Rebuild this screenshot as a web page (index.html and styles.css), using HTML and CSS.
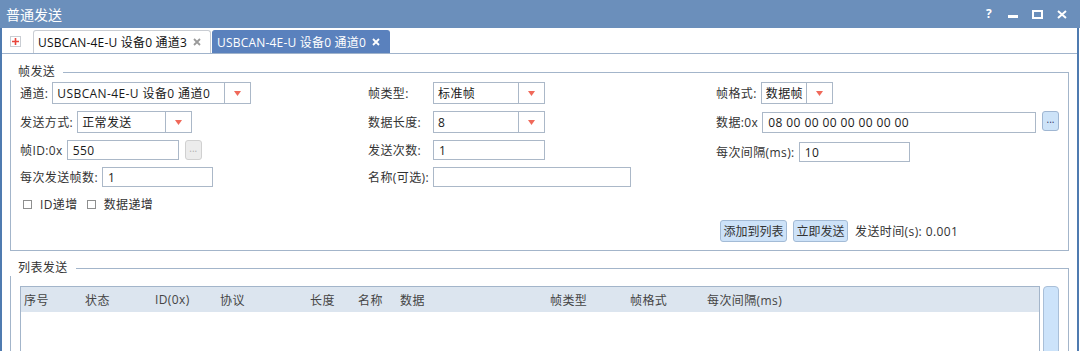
FILE: index.html
```html
<!DOCTYPE html>
<html lang="zh-CN">
<head>
    <meta charset="UTF-8">
    <title>普通发送</title>
    <link rel="stylesheet" href="styles.css">
</head>
<body>
    <div class="titlebar">
        <span class="title">普通发送</span>
        <div class="win-btns">
            <span class="win-help">?</span>
            <svg width="10" height="10" viewBox="0 0 10 10"><rect x="0" y="6" width="10" height="3" fill="#fff"/></svg>
            <svg width="11" height="9" viewBox="0 0 11 9"><rect x="1" y="1" width="9" height="7" fill="none" stroke="#fff" stroke-width="2"/></svg>
            <svg width="10" height="9" viewBox="0 0 10 9"><path d="M1 1 L9 8 M9 1 L1 8" stroke="#fff" stroke-width="2"/></svg>
        </div>
    </div>

    <div class="window">
        <div class="tabstrip">
            <span class="tab-add">
                <svg width="9" height="9" viewBox="0 0 9 9"><path d="M4.5 1 V8 M1 4.5 H8" stroke="#e8453c" stroke-width="1.6"/></svg>
            </span>
            <div class="tab">
                <span>USBCAN-4E-U 设备0 通道3</span>
                <svg class="tab-close" width="8" height="8" viewBox="0 0 8 8"><path d="M1 1 L7 7 M7 1 L1 7" stroke="#9a9a9a" stroke-width="1.8"/></svg>
            </div>
            <div class="tab active">
                <span>USBCAN-4E-U 设备0 通道0</span>
                <svg class="tab-close" width="8" height="8" viewBox="0 0 8 8"><path d="M1 1 L7 7 M7 1 L1 7" stroke="#fff" stroke-width="1.8"/></svg>
            </div>
        </div>

        <div class="main">
            <!-- 帧发送 -->
            <div class="group">
                <div class="group-head">
                    <span class="group-title">帧发送</span>
                    <span class="group-rule"></span>
                </div>
                <div class="group-body frame-body">
                    <div class="col">
                        <div class="field">
                            <label>通道:</label>
                            <div class="combo combo-channel"><span class="combo-text">USBCAN-4E-U 设备0 通道0</span><span class="combo-arrow"><svg width="7" height="5" viewBox="0 0 7 5"><path d="M0 0 H7 L3.5 5 Z" fill="#f0695a"/></svg></span></div>
                        </div>
                        <div class="field">
                            <label>发送方式:</label>
                            <div class="combo combo-mode"><span class="combo-text">正常发送</span><span class="combo-arrow"><svg width="7" height="5" viewBox="0 0 7 5"><path d="M0 0 H7 L3.5 5 Z" fill="#f0695a"/></svg></span></div>
                        </div>
                        <div class="field short">
                            <label>帧ID:0x</label>
                            <input class="in-id" type="text" value="550">
                            <span class="dots-btn disabled">...</span>
                        </div>
                        <div class="field short">
                            <label>每次发送帧数:</label>
                            <input class="in-count" type="text" value="1">
                        </div>
                        <div class="field short checks">
                            <span class="check"></span><span class="check-label">ID递增</span>
                            <span class="check"></span><span class="check-label">数据递增</span>
                        </div>
                    </div>

                    <div class="col col-mid">
                        <div class="field">
                            <label>帧类型:</label>
                            <div class="combo combo-type"><span class="combo-text">标准帧</span><span class="combo-arrow"><svg width="7" height="5" viewBox="0 0 7 5"><path d="M0 0 H7 L3.5 5 Z" fill="#f0695a"/></svg></span></div>
                        </div>
                        <div class="field">
                            <label>数据长度:</label>
                            <div class="combo combo-type"><span class="combo-text">8</span><span class="combo-arrow"><svg width="7" height="5" viewBox="0 0 7 5"><path d="M0 0 H7 L3.5 5 Z" fill="#f0695a"/></svg></span></div>
                        </div>
                        <div class="field short">
                            <label>发送次数:</label>
                            <input class="in-times" type="text" value="1">
                        </div>
                        <div class="field short">
                            <label>名称(可选):</label>
                            <input class="in-name" type="text" value="">
                        </div>
                    </div>

                    <div class="col col-right">
                        <div class="field">
                            <label>帧格式:</label>
                            <div class="combo combo-format"><span class="combo-text">数据帧</span><span class="combo-arrow"><svg width="7" height="5" viewBox="0 0 7 5"><path d="M0 0 H7 L3.5 5 Z" fill="#f0695a"/></svg></span></div>
                        </div>
                        <div class="field">
                            <label>数据:0x</label>
                            <input class="in-data" type="text" value="08 00 00 00 00 00 00 00">
                            <span class="dots-btn">...</span>
                        </div>
                        <div class="field short interval">
                            <label>每次间隔(ms):</label>
                            <input class="in-interval" type="text" value="10">
                        </div>
                        <div class="actions">
                            <button class="btn btn-add">添加到列表</button>
                            <button class="btn btn-send">立即发送</button>
                            <span class="send-time">发送时间(s): 0.001</span>
                        </div>
                    </div>
                </div>
            </div>

            <!-- 列表发送 -->
            <div class="group group-list">
                <div class="group-head">
                    <span class="group-title">列表发送</span>
                    <span class="group-rule"></span>
                </div>
                <div class="group-body list-body">
                    <div class="table">
                        <div class="table-head">
                            <span>序号</span>
                            <span>状态</span>
                            <span>ID(0x)</span>
                            <span>协议</span>
                            <span>长度</span>
                            <span>名称</span>
                            <span>数据</span>
                            <span>帧类型</span>
                            <span>帧格式</span>
                            <span>每次间隔(ms)</span>
                        </div>
                    </div>
                    <div class="scrollbar"></div>
                </div>
            </div>
        </div>
    </div>
</body>
</html>
```

FILE: styles.css
```css
/* 普通发送 window */
* {
    box-sizing: border-box;
}

body {
    margin: 0;
    width: 1080px;
    height: 351px;
    overflow: hidden;
    background: #ffffff;
    font-family: "Open Sans", "Noto Sans CJK SC", sans-serif;
    font-size: 12px;
    letter-spacing: 0.4px;
    color: #333333;
}

.titlebar {
    height: 28px;
    background-color: #6b8fbb;
    color: #ffffff;
    display: flex;
    align-items: center;
    padding-left: 6px;
}

.title {
    font-size: 14px;
    letter-spacing: 0;
    font-family: "Noto Sans CJK SC", sans-serif;
}

.win-btns {
    margin-left: auto;
    display: flex;
    align-items: center;
    gap: 14px;
    padding-right: 13px;
}

.win-help {
    font-weight: bold;
    font-size: 12px;
    width: 7px;
    line-height: 12px;
    margin-right: 1px;
}

.window {
    width: 1079px;
    height: 323px;
    border-left: 2px solid #4f7bb0;
    border-right: 2px solid #4f7bb0;
    overflow: hidden;
}

/* tabs */
.tabstrip {
    height: 26px;
    border-bottom: 1px solid #a0b3cb;
    display: flex;
    align-items: flex-end;
    padding-left: 8px;
}

.tab-add {
    align-self: center;
    width: 11px;
    height: 11px;
    margin-right: 12px;
    margin-top: 1px;
    border: 1px solid #c9cdd3;
    display: flex;
    align-items: center;
    justify-content: center;
}

.tab {
    width: 178px;
    height: 23px;
    padding: 0 9px 0 4px;
    display: flex;
    align-items: center;
    border: 1px solid #c9cdd3;
    border-bottom: none;
    border-radius: 3px 3px 0 0;
    color: #111111;
    letter-spacing: 0.2px;
    white-space: nowrap;
}

.tab.active {
    background-color: #5a81bd;
    border-color: #5a81bd;
    color: #ffffff;
    margin-left: 1px;
}

.tab-close {
    margin-left: auto;
    flex-shrink: 0;
}

/* groups */
.main {
    padding: 10px 8px 0 8px;
}

.group-head {
    display: flex;
    height: 16px;
}

.group-title {
    line-height: 16px;
    padding: 0 8px;
}

.group-rule {
    flex: 1;
    margin-top: 8px;
    border-top: 1px solid #a3b5ca;
    border-right: 1px solid #a3b5ca;
}

.group-body {
    border: 1px solid #a3b5ca;
    border-top: none;
}

.frame-body {
    display: grid;
    grid-template-columns: 348px 348px 1fr;
    padding: 2px 9px 8px 9px;
}

.col {
    display: flex;
    flex-direction: column;
    gap: 7px;
}

.field {
    display: flex;
    align-items: center;
    gap: 4px;
    height: 22px;
}

.field.short {
    height: 20px;
}

.field label {
    white-space: nowrap;
}

.col-mid .field {
    gap: 0;
}

.col-mid .field label {
    width: 65px;
}

.field.interval {
    margin-top: 2px;
}

input {
    font: inherit;
    letter-spacing: inherit;
    color: #1a1a1a;
    height: 20px;
    border: 1px solid #abb8c8;
    padding: 0 5px;
    outline: none;
}

.combo {
    height: 22px;
    border: 1px solid #abb8c8;
    display: flex;
    color: #1a1a1a;
}

.combo-text {
    flex: 1;
    padding-left: 4px;
    display: flex;
    align-items: center;
    white-space: nowrap;
    overflow: hidden;
}

.combo-arrow {
    width: 26px;
    border-left: 1px solid #abb8c8;
    display: flex;
    align-items: center;
    justify-content: center;
}

.combo-channel { width: 199px; }
.combo-mode { width: 115px; }
.combo-type { width: 112px; }
.combo-format { width: 72px; }

.in-id { width: 112px; }
.in-count { width: 111px; }
.in-times { width: 112px; }
.in-name { width: 198px; }
.in-interval { width: 111px; }

.in-data {
    flex: 1;
    height: 21px;
    min-width: 0;
}

.dots-btn {
    width: 17px;
    height: 20px;
    margin-left: 2px;
    border: 1px solid #9fb6d2;
    border-radius: 3px;
    background: #cde3f8;
    font-size: 10px;
    letter-spacing: 0;
    line-height: 14px;
    text-align: center;
    color: #333366;
    align-self: flex-start;
}

.dots-btn.disabled {
    background: #ececec;
    border-color: #d0d0d0;
    color: #b0b0b0;
    margin-left: 2px;
}

.checks {
    gap: 0;
    padding-left: 3px;
}

.check {
    width: 9px;
    height: 9px;
    border: 1px solid #8e8f8f;
    margin-right: 8px;
}

.check-label {
    margin-right: 9px;
}

.actions {
    margin-top: 51px;
    padding-left: 4px;
    display: flex;
    align-items: center;
    gap: 6px;
}

.btn {
    font: inherit;
    letter-spacing: 0;
    color: #333333;
    height: 22px;
    padding: 0;
    border: 1px solid #a3bbd6;
    border-radius: 3px;
    background: #cde2f8;
}

.btn-add { width: 67px; }
.btn-send { width: 55px; }

.send-time {
    margin-left: 1px;
}

/* list */
.group-list {
    margin-top: 9px;
}

.list-body {
    display: flex;
    height: 120px;
    padding: 10px 9px 0 9px;
}

.table {
    flex: 1;
    border: 1px solid #a3b5ca;
}

.table-head {
    display: grid;
    grid-template-columns: 61px 70px 65px 90px 48px 42px 150px 80px 77px 1fr;
    height: 25px;
    align-items: center;
    background: #dce5ef;
    color: #444444;
}

.table-head span {
    padding-left: 3px;
    white-space: nowrap;
}

.scrollbar {
    width: 16px;
    margin-left: 3px;
    background: #cce3fa;
    border: 1px solid #a9bfd8;
    border-radius: 4px;
}
```
